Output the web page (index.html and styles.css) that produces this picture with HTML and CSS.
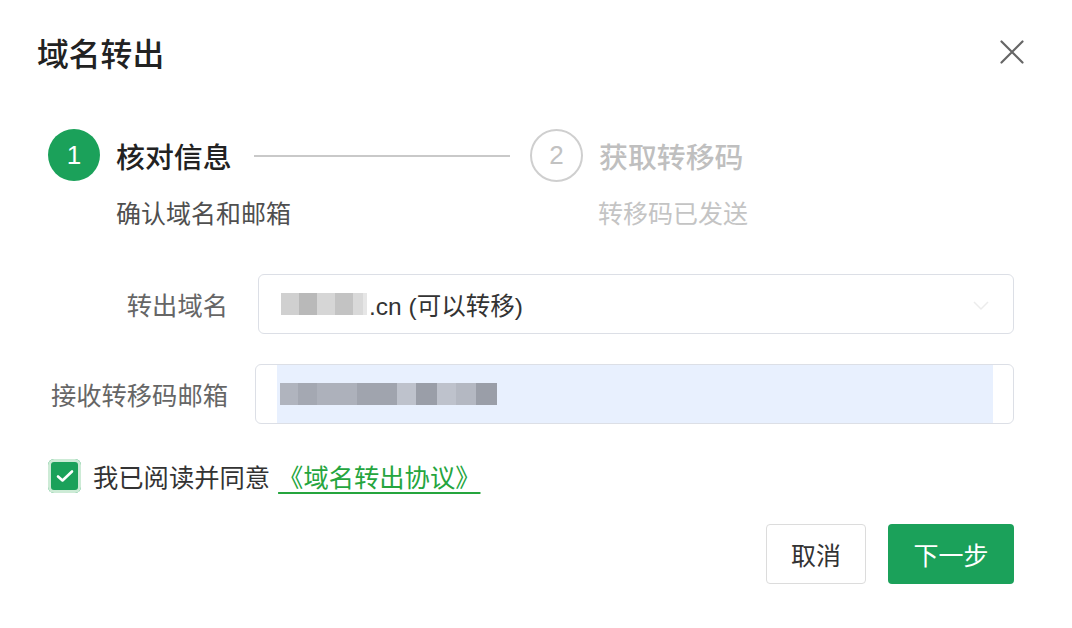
FILE: index.html
```html
<!DOCTYPE html>
<html lang="zh-CN">
<head>
<meta charset="utf-8">
<title>域名转出</title>
<link rel="stylesheet" href="styles.css">
</head>
<body>
<div class="dialog">
  <div class="dialog-header">
    <h1 class="dialog-title">域名转出</h1>
    <button class="close" aria-label="关闭">
      <svg width="24" height="24" viewBox="0 0 24 24"><path d="M1.5 1.5 L22.5 22.5 M22.5 1.5 L1.5 22.5" stroke="#666" stroke-width="2.2" fill="none" stroke-linecap="round"/></svg>
    </button>
  </div>

  <div class="steps">
    <div class="step step-active">
      <div class="step-head">
        <span class="step-circle">1</span>
        <span class="step-title">核对信息</span>
        <span class="step-tail"></span>
      </div>
      <div class="step-desc">确认域名和邮箱</div>
    </div>
    <div class="step step-wait">
      <div class="step-head">
        <span class="step-circle">2</span>
        <span class="step-title">获取转移码</span>
      </div>
      <div class="step-desc">转移码已发送</div>
    </div>
  </div>

  <div class="form">
    <div class="form-row">
      <label class="form-label">转出域名</label>
      <div class="select">
        <span class="mask mask-light">
          <i class="px p1"></i><i class="px p2"></i><i class="px p3"></i><i class="px p4"></i><i class="px p5"></i><i class="px p6"></i>
        </span>
        <span class="select-text">.cn (可以转移)</span>
        <svg class="select-arrow" width="16" height="10" viewBox="0 0 16 10"><path d="M1 1 L8 8 L15 1" stroke="#ececec" stroke-width="1.5" fill="none"/></svg>
      </div>
    </div>
    <div class="form-row">
      <label class="form-label">接收转移码邮箱</label>
      <div class="input">
        <div class="autofill">
          <span class="mask mask-dark">
            <i class="px d1"></i><i class="px d2"></i><i class="px d3"></i><i class="px d3"></i><i class="px d4"></i><i class="px d4"></i><i class="px d5"></i><i class="px d6"></i><i class="px d5"></i><i class="px d7"></i><i class="px d6"></i>
          </span>
        </div>
      </div>
    </div>
  </div>

  <div class="agree">
    <span class="checkbox">
      <svg width="18" height="14" viewBox="0 0 18 14"><path d="M2 7.5 L6.5 11.5 L16 2.5" stroke="#fff" stroke-width="2.6" fill="none" stroke-linecap="round" stroke-linejoin="round"/></svg>
    </span>
    <span class="agree-text">我已阅读并同意</span>
    <a class="agree-link" href="#">《域名转出协议》</a>
  </div>

  <div class="footer">
    <button class="btn btn-default">取消</button>
    <button class="btn btn-primary">下一步</button>
  </div>
</div>
</body>
</html>
```

FILE: styles.css
```css
* { box-sizing: border-box; }
html, body {
  margin: 0;
  padding: 0;
  background: #fff;
}
body {
  font-family: "Liberation Sans", "Noto Sans CJK SC", sans-serif;
  color: #333;
}
.dialog {
  width: 1072px;
  height: 628px;
  padding: 30px 58px 0 37px;
}
.dialog-header {
  display: flex;
  align-items: center;
  justify-content: space-between;
  height: 44px;
}
.dialog-title {
  margin: 0;
  font-size: 31.8px;
  font-weight: 500;
  color: #222;
  line-height: 44px;
  font-family: "Noto Sans CJK SC", sans-serif;
}
.close {
  border: 0;
  background: none;
  padding: 0;
  width: 24px;
  height: 24px;
  margin-right: -10px;
  display: flex;
}

.steps {
  display: flex;
  margin-top: 55px;
  padding-left: 11px;
}
.step-active { width: 482px; }
.step-head {
  display: flex;
  align-items: center;
  height: 52px;
}
.step-circle {
  width: 52px;
  height: 52px;
  border-radius: 50%;
  display: flex;
  align-items: center;
  justify-content: center;
  font-size: 26px;
  font-family: "Liberation Sans", sans-serif;
  flex: none;
}
.step-active .step-circle {
  background: #1ba15a;
  color: #fff;
}
.step-wait .step-circle {
  border: 2px solid #cfcfcf;
  color: #c2c2c2;
  width: 53px;
  height: 53px;
}
.step-title {
  font-size: 28.9px;
  font-weight: 500;
  margin-left: 16px;
  font-family: "Noto Sans CJK SC", sans-serif;
}
.step-active .step-title { color: #222; }
.step-wait .step-title { color: #bfbfbf; }
.step-tail {
  flex: 1;
  height: 2px;
  background: #c9c9c9;
  margin: 2px 20px 0 22px;
}
.step-desc {
  font-size: 25px;
  line-height: 34px;
  margin-top: 14px;
  margin-left: 68px;
  font-family: "Noto Sans CJK SC", sans-serif;
}
.step-active .step-desc { color: #4f4f4f; }
.step-wait .step-desc { color: #c4c4c4; }

.form {
  margin-top: 45px;
  padding-left: 11px;
  display: flex;
  flex-direction: column;
  gap: 30px;
}
.form-row {
  display: flex;
  align-items: center;
}
.form-label {
  width: 180px;
  text-align: right;
  font-size: 25.3px;
  color: #666;
  font-family: "Noto Sans CJK SC", sans-serif;
  flex: none;
}
.select, .input {
  flex: 1;
  height: 60px;
  border: 1px solid #dcdfe6;
  border-radius: 6px;
  display: flex;
  align-items: center;
}
.select {
  margin-left: 30px;
  padding-left: 22px;
  position: relative;
}
.input {
  margin-left: 27px;
  padding: 0 20px 0 21px;
}
.select-text {
  font-size: 24.5px;
  color: #333;
  margin-left: 2px;
}
.select-arrow {
  position: absolute;
  right: 24px;
  top: 26px;
}
.autofill {
  background: #e8f0fe;
  height: 100%;
  width: 100%;
  display: flex;
  align-items: center;
}
.mask { display: flex; }
.px {
  display: block;
  width: 18px;
  height: 22px;
}
.p1 { background: #d0d0d0; }
.p2 { background: #b9b9b9; }
.p3 { background: #d6d6d6; }
.p4 { background: #c3c3c3; }
.p5 { background: #d9d9d9; width: 10px; }
.p6 { background: #e6e6e6; width: 4px; }
.mask-dark { margin-left: 3px; }
.d1 { background: #b0b4be; }
.d2 { background: #a4a8b2; width: 19px; }
.d3 { background: #adb1bb; width: 20px; }
.d4 { background: #a0a4ae; width: 20px; }
.d5 { background: #bec2cc; width: 19px; }
.d6 { background: #9a9ea8; width: 21px; }
.d7 { background: #b4b8c2; width: 20px; }

.agree {
  display: flex;
  align-items: center;
  margin-top: 34px;
  padding-left: 11px;
}
.checkbox {
  width: 33px;
  height: 34px;
  border-radius: 6px;
  background: #1ba15a;
  box-shadow: inset 0 0 0 3px #cdebd6;
  display: flex;
  align-items: center;
  justify-content: center;
  flex: none;
}
.agree-text {
  margin-left: 12px;
  font-size: 25.3px;
  color: #333;
  font-family: "Noto Sans CJK SC", sans-serif;
}
.agree-link {
  margin-left: 8px;
  font-size: 25.3px;
  color: #25a53e;
  text-decoration: underline;
  text-decoration-thickness: 2px;
  text-underline-offset: 5px;
  font-family: "Noto Sans CJK SC", sans-serif;
}

.footer {
  display: flex;
  justify-content: flex-end;
  gap: 22px;
  margin-top: 30px;
}
.btn {
  height: 60px;
  border-radius: 4px;
  font-size: 25px;
  font-family: "Noto Sans CJK SC", sans-serif;
  cursor: pointer;
}
.btn-default {
  width: 100px;
  background: #fff;
  border: 1px solid #dcdcdc;
  color: #333;
}
.btn-primary {
  width: 126px;
  background: #1ba15a;
  border: 0;
  color: #fff;
}
```
